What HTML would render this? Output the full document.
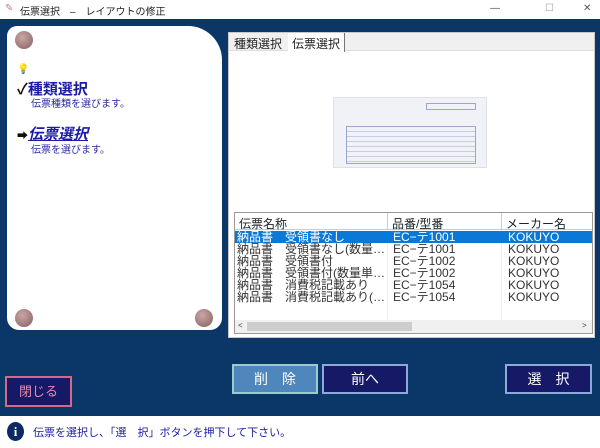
<!DOCTYPE html>
<html><head><meta charset="utf-8"><style>
*{margin:0;padding:0;box-sizing:border-box}
body{width:600px;height:448px;overflow:hidden;background:#0b3768;font-family:"Liberation Sans","Noto Sans CJK JP",sans-serif;position:relative}
.abs{position:absolute}
.title{left:0;top:0;width:600px;height:19px;background:#fff;font-size:10px;color:#222;padding:3px 0 0 20px}
.panel{left:7px;top:26px;width:215px;height:304px;background:#fff;border-radius:10px 34px 12px 12px}
.knob{width:18px;height:18px;border-radius:50%;background:radial-gradient(circle at 40% 35%,#c9a7a7,#9a7474 70%,#6e5252);}
.rp{left:228px;top:32px;width:367px;height:306px;background:#fff;border:1px solid #c8c8c8}
.tabs{left:0;top:0;width:365px;height:18px;background:#f0f0f0;border-bottom:1px solid #ddd;font-size:12px;color:#222}
.btn{font-size:14px;color:#fff;text-align:center;line-height:27px;border:2px solid #8fa8d8;background:#161a66}
.row{position:absolute;left:0;width:355px;height:12px;font-size:12px;line-height:12px;color:#333}
.row span{position:absolute;top:0}
</style></head><body>
<div class="abs title"><span style="position:absolute;left:5px;top:3px;color:#c77">✎</span>伝票選択　–　レイアウトの修正<span style="position:absolute;left:490px;color:#555">—</span><span style="position:absolute;left:545px;color:#999">☐</span><span style="position:absolute;left:583px;color:#555">✕</span></div>
<div class="abs panel"></div>
<div class="abs knob" style="left:15px;top:31px"></div>
<div class="abs knob" style="left:15px;top:309px"></div>
<div class="abs knob" style="left:195px;top:309px"></div>
<div class="abs" style="left:17px;top:64px;font-size:10px;color:#cc0">💡</div>
<div class="abs" style="left:17px;top:78px;font-size:15px;font-weight:bold;color:#1b1ba6"><span style="color:#111">✓</span>種類選択</div>
<div class="abs" style="left:31px;top:95px;font-size:10px;color:#2a2aa0">伝票種類を選びます。</div>
<div class="abs" style="left:17px;top:123px;font-size:15px;font-weight:bold;color:#1b1ba6"><span style="color:#111;font-size:11px">➡</span><i style="text-decoration:underline">伝票選択</i></div>
<div class="abs" style="left:31px;top:141px;font-size:10px;color:#2a2aa0">伝票を選びます。</div>
<div class="abs rp">
<div class="abs tabs"><span style="position:absolute;left:5px;top:2px">種類選択</span><span style="position:absolute;left:59px;top:0;height:19px;background:#fff;padding:2px 4px 0;border-right:1px solid #777">伝票選択</span></div>
<div class="abs" style="left:104px;top:64px;width:154px;height:71px;background:#f1f2f7;border:1px solid #e0e0e8">
<div class="abs" style="left:12px;top:28px;width:130px;height:38px;border:1px solid #9aa6cc;background:repeating-linear-gradient(#f1f2f7 0 4px,#c7cde2 4px 5px)"></div>
<div class="abs" style="left:92px;top:5px;width:50px;height:7px;border:1px solid #9aa6cc"></div></div>
<div class="abs" style="left:5px;top:179px;width:359px;height:122px;border:1px solid #999;background:#fff">
<div class="abs" style="left:0;top:0;width:357px;height:17px;border-bottom:1px solid #ccc;font-size:12px;color:#222">
<span class="abs" style="left:4px;top:2px">伝票名称</span><span class="abs" style="left:152px;top:0;height:17px;border-left:1px solid #ccc;padding:2px 4px">品番/型番</span><span class="abs" style="left:266px;top:0;height:17px;border-left:1px solid #ccc;padding:2px 4px">メーカー名</span></div>
<div class="abs" style="left:152px;top:17px;height:90px;border-left:1px solid #eee"></div>
<div class="abs" style="left:266px;top:17px;height:90px;border-left:1px solid #eee"></div>
<div class="row" style="top:18px;background:#0a78d7;color:#fff;width:357px"><span style="left:2px">納品書　受領書なし</span><span style="left:158px">EC−テ1001</span><span style="left:273px">KOKUYO</span></div>
<div class="row" style="top:30px"><span style="left:2px">納品書　受領書なし(数量…</span><span style="left:158px">EC−テ1001</span><span style="left:273px">KOKUYO</span></div>
<div class="row" style="top:42px"><span style="left:2px">納品書　受領書付</span><span style="left:158px">EC−テ1002</span><span style="left:273px">KOKUYO</span></div>
<div class="row" style="top:54px"><span style="left:2px">納品書　受領書付(数量単…</span><span style="left:158px">EC−テ1002</span><span style="left:273px">KOKUYO</span></div>
<div class="row" style="top:66px"><span style="left:2px">納品書　消費税記載あり</span><span style="left:158px">EC−テ1054</span><span style="left:273px">KOKUYO</span></div>
<div class="row" style="top:78px"><span style="left:2px">納品書　消費税記載あり(…</span><span style="left:158px">EC−テ1054</span><span style="left:273px">KOKUYO</span></div>
<div class="abs" style="left:0;top:107px;width:357px;height:13px;background:#f0f0f0;font-size:8px;color:#444"><span class="abs" style="left:3px;top:1px">&lt;</span><div class="abs" style="left:12px;top:2px;width:165px;height:9px;background:#cdcdcd"></div><span class="abs" style="left:347px;top:1px">&gt;</span></div>
</div></div>
<div class="abs btn" style="left:5px;top:376px;width:67px;height:31px;border-color:#d06a8a;color:#e88aa8;line-height:27px;font-size:13px">閉じる</div>
<div class="abs btn" style="left:232px;top:364px;width:86px;height:30px;background:#4f87bd;border-color:#9cc">削　除</div>
<div class="abs btn" style="left:322px;top:364px;width:86px;height:30px">前へ</div>
<div class="abs btn" style="left:505px;top:364px;width:87px;height:30px">選　択</div>
<div class="abs" style="left:0;top:416px;width:600px;height:32px;background:#fff"></div>
<div class="abs" style="left:7px;top:422px;width:17px;height:19px;border-radius:50%;background:#0b2a63;color:#fff;font:bold 13px 'Liberation Serif',serif;text-align:center;line-height:19px">i</div>
<div class="abs" style="left:33px;top:424px;font-size:11px;color:#1b1ba6">伝票を選択し、「選　択」ボタンを押下して下さい。</div>
</body></html>
